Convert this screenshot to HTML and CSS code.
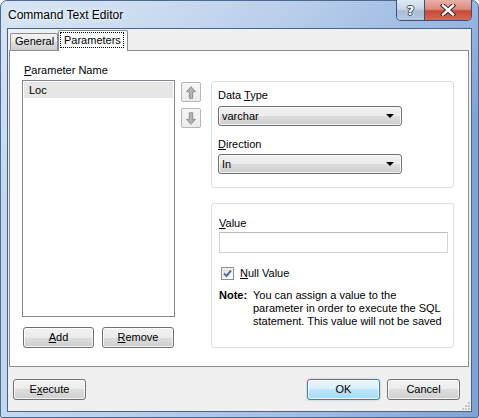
FILE: index.html
```html
<!DOCTYPE html>
<html>
<head>
<meta charset="utf-8">
<title>Command Text Editor</title>
<link rel="stylesheet" href="styles.css">
</head>
<body>
<div class="window">
  <div class="titlebar">
    <span class="title">Command Text Editor</span>
    <div class="caption-buttons">
      <div class="cap help">?</div>
      <div class="cap close">
        <svg width="16" height="12" viewBox="0 0 16 12">
          <path d="M3 1.5 L13 10.5 M13 1.5 L3 10.5" stroke="#3a2a2a" stroke-width="4.4" stroke-linecap="square" fill="none"/>
          <path d="M3 1.5 L13 10.5 M13 1.5 L3 10.5" stroke="#ffffff" stroke-width="2.4" stroke-linecap="square" fill="none"/>
        </svg>
      </div>
    </div>
  </div>
  <div class="client">
    <div class="tabs">
      <div class="tab">General</div>
      <div class="tab active"><span class="focus">Parameters</span></div>
    </div>
    <div class="panel">
      <div class="col-left">
        <div class="label indent"><u>P</u>arameter Name</div>
        <div class="list">
          <div class="item">Loc</div>
        </div>
        <div class="btn-row">
          <div class="btn add"><span><u>A</u>dd</span></div>
          <div class="btn remove"><span><u>R</u>emove</span></div>
        </div>
      </div>
      <div class="col-mid">
        <div class="arrow-btn">
          <svg width="10" height="13" viewBox="0 0 10 13"><path d="M5 0.7 L9.5 5.7 H6.7 V12.3 H3.3 V5.7 H0.5 Z" fill="#b4b4b4" stroke="#8f8f8f" stroke-width="1"/></svg>
        </div>
        <div class="arrow-btn down">
          <svg width="10" height="13" viewBox="0 0 10 13"><path d="M5 12.3 L9.5 7.3 H6.7 V0.7 H3.3 V7.3 H0.5 Z" fill="#b4b4b4" stroke="#8f8f8f" stroke-width="1"/></svg>
        </div>
      </div>
      <div class="col-right">
        <div class="group g1">
          <div class="label">Data <u>T</u>ype</div>
          <div class="combo first"><span>varchar</span><i class="tri"></i></div>
          <div class="label dir"><u>D</u>irection</div>
          <div class="combo second"><span>In</span><i class="tri"></i></div>
        </div>
        <div class="group g2">
          <div class="label"><u>V</u>alue</div>
          <div class="input"></div>
          <div class="check-row">
            <div class="checkbox">
              <svg width="11" height="11" viewBox="0 0 11 11"><path d="M2 5.5 L4.5 8 L9 2.5" stroke="#5a6e9e" stroke-width="2" fill="none"/></svg>
            </div>
            <span class="check-label"><u>N</u>ull Value</span>
          </div>
          <div class="note">
            <b class="note-head">Note:</b>
            <div class="note-text">You can assign a value to the<br>parameter in order to execute the SQL<br>statement. This value will not be saved</div>
          </div>
        </div>
      </div>
    </div>
    <div class="footer">
      <div class="btn execute"><span>E<u>x</u>ecute</span></div>
      <div class="btn ok"><span>OK</span></div>
      <div class="btn cancel"><span>Cancel</span></div>
    </div>
    <svg class="grip" width="9" height="9" viewBox="0 0 9 9">
      <rect x="7" y="1" width="2" height="2" fill="#c4c4c4"/>
      <rect x="4" y="4" width="2" height="2" fill="#c4c4c4"/>
      <rect x="7" y="4" width="2" height="2" fill="#c4c4c4"/>
      <rect x="1" y="7" width="2" height="2" fill="#c4c4c4"/>
      <rect x="4" y="7" width="2" height="2" fill="#c4c4c4"/>
      <rect x="7" y="7" width="2" height="2" fill="#c4c4c4"/>
    </svg>
  </div>
</div>
</body>
</html>
```
FILE: styles.css
```css
* { box-sizing: border-box; }
html, body { margin: 0; padding: 0; }
body {
  width: 479px;
  height: 418px;
  background: #ffffff;
  font-family: "Liberation Sans", Arial, sans-serif;
  font-size: 11px;
  color: #000;
  overflow: hidden;
}
u { text-decoration-thickness: 1px; text-underline-offset: 1px; }

.window {
  width: 479px;
  height: 418px;
  display: flex;
  flex-direction: column;
  border: 1px solid #4d6a90;
  border-radius: 7px 7px 2px 2px;
  background:
    linear-gradient(170deg, rgba(255,255,255,0.35) 0%, rgba(255,255,255,0) 40%),
    linear-gradient(to right, #c3d7ef 0%, #b8ceeb 30%, #a3bfe5 60%, #7fa4d8 100%);
}

.titlebar {
  height: 27px;
  flex: none;
  display: flex;
  align-items: flex-start;
}
.title {
  font-size: 12px;
  line-height: 15px;
  margin: 7px 0 0 7px;
  color: #000;
  text-shadow: 0 0 6px rgba(255,255,255,0.95), 0 0 3px rgba(255,255,255,0.9);
}
.caption-buttons {
  margin-left: auto;
  margin-right: 6px;
  margin-top: -1px;
  display: flex;
  height: 21px;
  border: 1px solid #3a5276;
  border-top: none;
  border-radius: 0 0 5px 5px;
  overflow: hidden;
}
.cap {
  display: flex;
  align-items: center;
  justify-content: center;
  height: 100%;
}
.help {
  width: 28px;
  border-right: 1px solid #3a5276;
  background: linear-gradient(#dfe8f4 0%, #c9d6e8 45%, #a9bcd6 55%, #b7c9e1 100%);
  color: #fff;
  font-family: "DejaVu Sans", sans-serif;
  font-weight: bold;
  font-size: 13px;
  text-shadow: 1px 0 0 #3b4a60, -1px 0 0 #3b4a60, 0 1px 0 #3b4a60, 0 -1px 0 #3b4a60;
}
.close {
  width: 46px;
  background: linear-gradient(#eab1a8 0%, #dc8c80 45%, #c84a37 55%, #d56a4f 100%);
}

.client {
  position: relative;
  flex: 1;
  margin: 0 6px 5px 6px;
  border: 1px solid #4a6384;
  background: #f0f0f0;
  display: flex;
  flex-direction: column;
}

.tabs {
  height: 21px;
  flex: none;
  display: flex;
  align-items: flex-end;
  margin-left: 2px;
}
.tab {
  width: 48px;
  height: 17px;
  border: 1px solid #898c95;
  border-bottom: none;
  border-radius: 2px 2px 0 0;
  background: linear-gradient(#f2f2f2 0%, #ebebeb 50%, #dddddd 50%, #cfcfcf 100%);
  padding-left: 4px;
  line-height: 15px;
}
.tab.active {
  position: relative;
  z-index: 1;
  width: 70px;
  height: 21px;
  margin-bottom: -1px;
  background: #ffffff;
  padding: 1px 0 0 1px;
}
.focus {
  display: block;
  width: 64px;
  height: 16px;
  border: 1px dotted #000;
  line-height: 14px;
  padding-left: 3px;
}

.panel {
  flex: none;
  height: 317px;
  margin: 0 2px 0 1px;
  border: 1px solid #898c95;
  background: #ffffff;
  display: flex;
  padding: 13px 0 0 12px;
}

.label {
  height: 13px;
  line-height: 13px;
  white-space: nowrap;
}
.label.indent { margin-left: 2px; }

.col-left {
  width: 153px;
  display: flex;
  flex-direction: column;
}
.list {
  margin-top: 3px;
  height: 237px;
  border: 1px solid #828790;
  padding: 1px;
}
.item {
  height: 16px;
  line-height: 16px;
  background: #e6e6e6;
  padding-left: 5px;
}
.btn-row {
  margin-top: 10px;
  display: flex;
  gap: 8px;
  padding-left: 1px;
}

.btn {
  height: 21px;
  border: 1px solid #707070;
  border-radius: 3px;
  background: linear-gradient(#f2f2f2 0%, #ebebeb 50%, #dddddd 50%, #cfcfcf 100%);
  box-shadow: inset 0 0 0 1px rgba(255,255,255,0.75);
  display: flex;
  align-items: center;
  justify-content: center;
  line-height: 13px;
}
.btn.add { width: 71px; }
.btn.remove { width: 72px; }

.col-mid {
  margin-left: 6px;
  padding-top: 18px;
  display: flex;
  flex-direction: column;
  gap: 6px;
}
.arrow-btn {
  width: 20px;
  height: 20px;
  border: 1px solid #b3b6ba;
  border-radius: 2px;
  background: linear-gradient(#f7f7f7, #ececec);
  display: flex;
  align-items: center;
  justify-content: center;
}

.col-right {
  margin-left: 10px;
  width: 243px;
  display: flex;
  flex-direction: column;
}
.group {
  border: 1px solid #d5dfe5;
  border-radius: 3px;
}
.g1 {
  margin-top: 17px;
  height: 107px;
  padding: 7px 0 0 6px;
}
.g2 {
  margin-top: 15px;
  height: 145px;
  padding: 13px 0 0 7px;
}
.combo {
  width: 184px;
  height: 20px;
  border: 1px solid #707070;
  border-radius: 3px;
  background: linear-gradient(#f2f2f2 0%, #ebebeb 50%, #dddddd 50%, #cfcfcf 100%);
  box-shadow: inset 0 0 0 1px rgba(255,255,255,0.75);
  display: flex;
  align-items: center;
  padding: 0 7px 0 3px;
}
.combo.first { margin-top: 4px; }
.combo.second { margin-top: 3px; }
.label.dir { margin-top: 12px; }
.combo span { flex: 1; line-height: 13px; }
.tri {
  width: 0;
  height: 0;
  border-left: 4px solid transparent;
  border-right: 4px solid transparent;
  border-top: 4px solid #000;
}

.input {
  margin-top: 2px;
  width: 229px;
  height: 21px;
  border: 1px solid #d2d6dc;
  border-top-color: #b9bdc3;
  background: #fff;
}
.check-row {
  margin-top: 14px;
  height: 13px;
  display: flex;
  align-items: center;
  padding-left: 2px;
}
.checkbox {
  width: 13px;
  height: 13px;
  border: 1px solid #8e8f8f;
  background: linear-gradient(135deg, #dcdcdc 0%, #f6f6f6 70%, #ffffff 100%);
  box-shadow: inset 0 0 0 1px #f4f4f4;
  display: flex;
  align-items: center;
  justify-content: center;
}
.check-label {
  margin-left: 6px;
  line-height: 13px;
}
.note {
  margin-top: 9px;
  display: flex;
  line-height: 13px;
}
.note-head {
  width: 34px;
  flex: none;
}
.note-text { white-space: nowrap; }

.footer {
  margin-top: 12px;
  height: 21px;
  display: flex;
  padding: 0 11px 0 5px;
}
.btn.execute { width: 73px; }
.btn.ok {
  width: 73px;
  margin-left: auto;
  border-color: #3c7fb1;
  background: linear-gradient(#eaf6fd 0%, #d9f0fc 50%, #bee6fd 50%, #a7d9f5 100%);
  box-shadow: inset 0 0 0 1px rgba(255,255,255,0.8), 0 0 2px rgba(60,127,177,0.5);
}
.btn.cancel { width: 73px; margin-left: 7px; }

.grip {
  position: absolute;
  right: 1px;
  bottom: 1px;
}
```
